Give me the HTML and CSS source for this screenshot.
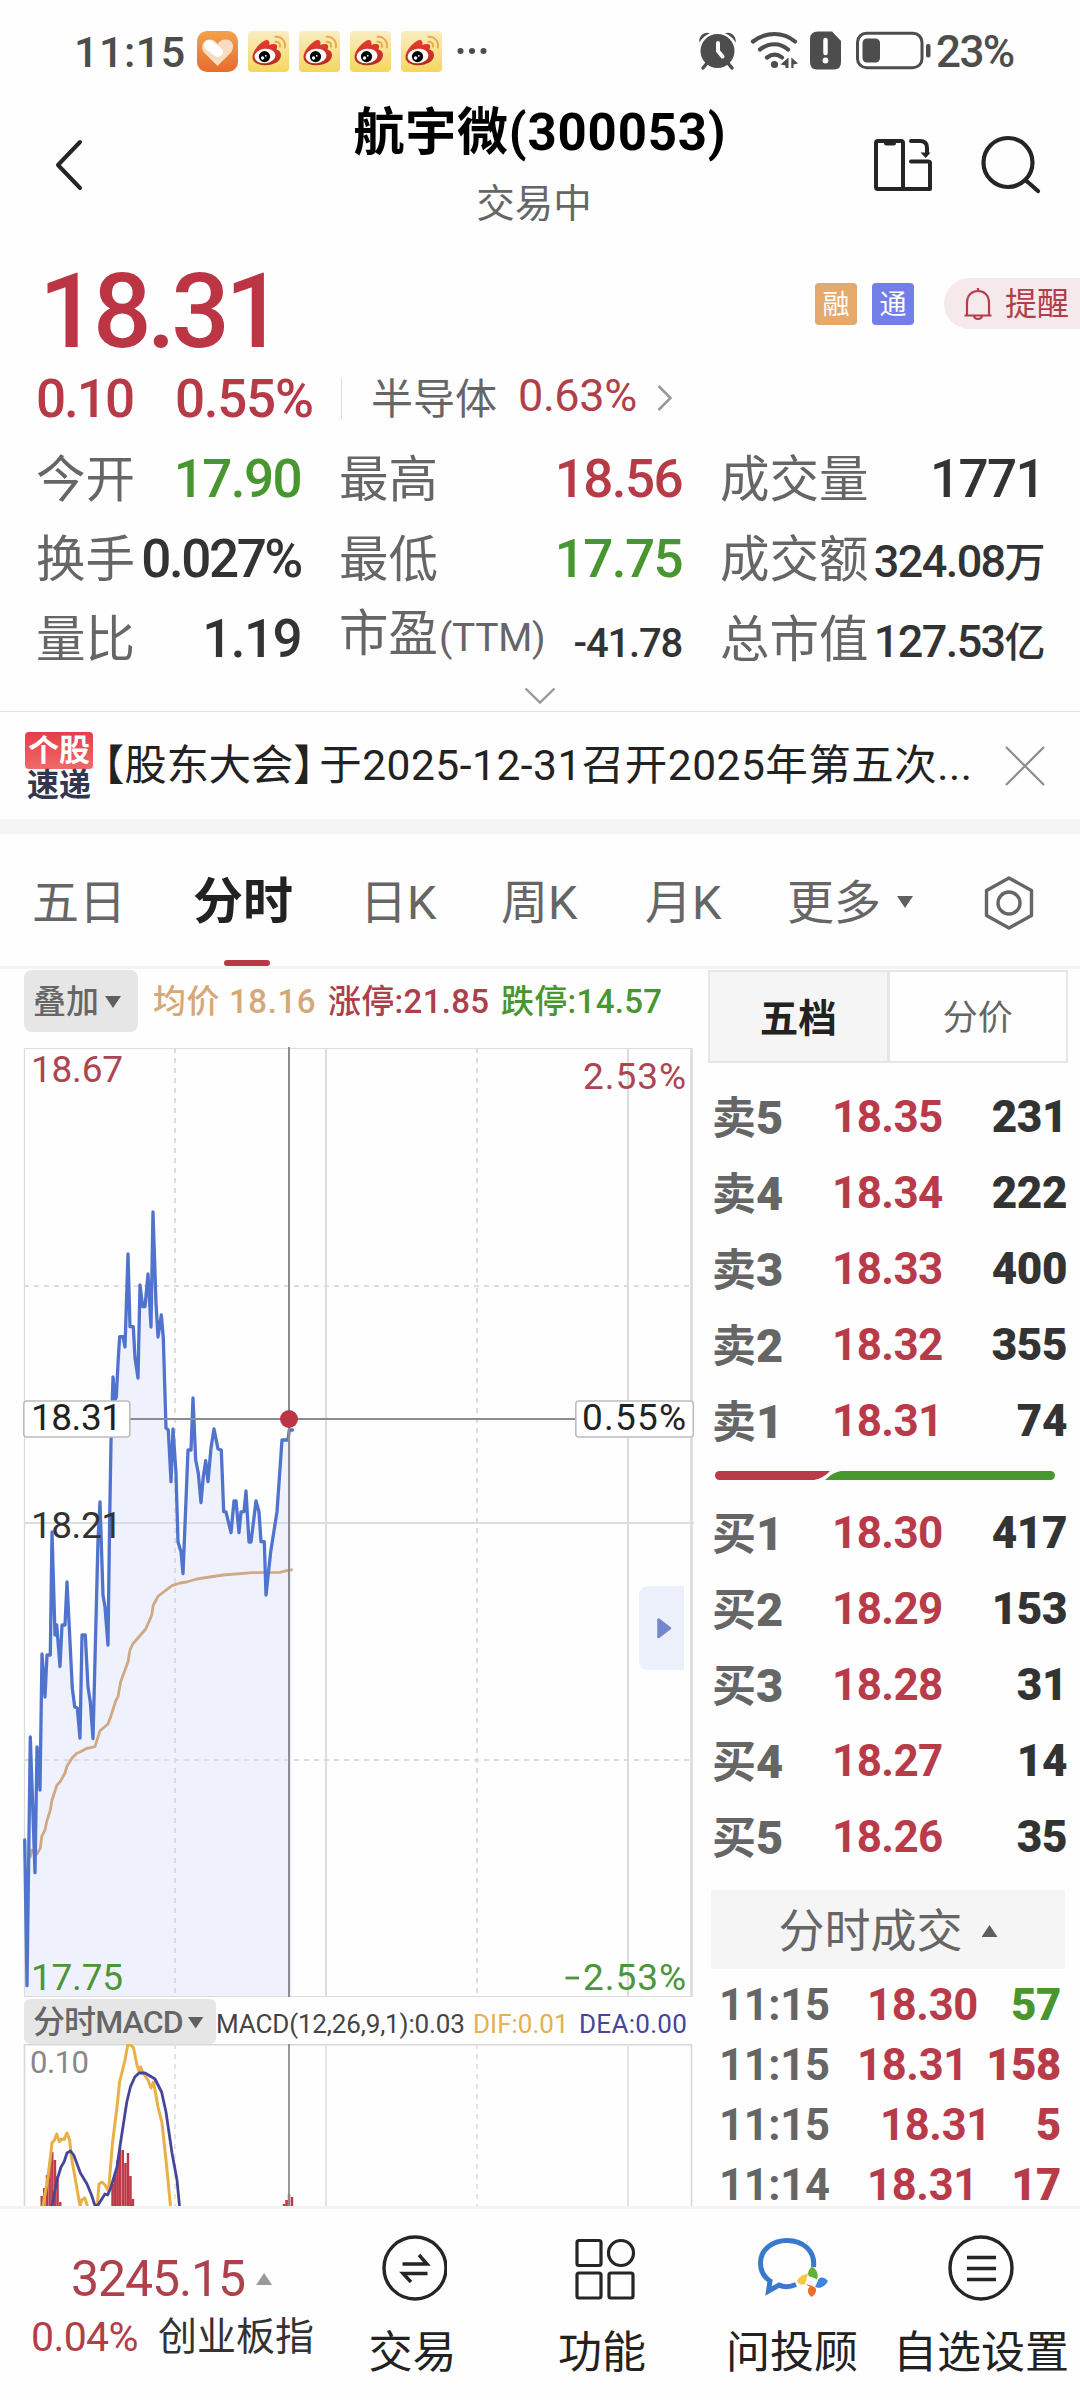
FILE: index.html
```html
<!DOCTYPE html>
<html lang="zh-CN">
<head>
<meta charset="utf-8">
<title>航宇微(300053)</title>
<link rel="stylesheet" href="styles.css">
</head>
<body>
<svg class="defs" aria-hidden="true">
  <defs>
    <linearGradient id="gHeart" x1="0" y1="0" x2="0" y2="1"><stop offset="0" stop-color="#f2a24c"/><stop offset="1" stop-color="#e86b2e"/></linearGradient>
    <linearGradient id="gWb" x1="0" y1="0" x2="0" y2="1"><stop offset="0" stop-color="#f9edc4"/><stop offset="1" stop-color="#f6d65c"/></linearGradient>
    <linearGradient id="gWbRed" x1="0" y1="0" x2="0" y2="1"><stop offset="0" stop-color="#ea3b30"/><stop offset="1" stop-color="#b02c22"/></linearGradient>
    <symbol id="weibo" viewBox="0 0 41 41">
      <rect width="41" height="41" rx="4" fill="url(#gWb)"/>
      <path d="M4.500 26C4.500 20 12 11 18 9C21 8.300 22 11 21.300 14C24 12.600 28 12.500 29 14.500C29.600 16 28.500 17.500 28.500 18.500C31 19 33 21 33 24C33 30 26 34.300 17.500 34.300C10 34.300 4.500 31.500 4.500 26Z" fill="url(#gWbRed)"/>
      <ellipse cx="17" cy="25" rx="10.500" ry="7.300" fill="#fff" transform="rotate(-6 17 25)"/>
      <circle cx="16.500" cy="25.600" r="5.600" fill="#000"/>
      <circle cx="14.600" cy="27" r="1.700" fill="#fff"/><circle cx="17.800" cy="24.800" r=".9" fill="#fff"/>
      <path d="M27.500 5.800C33 4.800 38 10 36.800 16.500M27.500 10.800C30.500 10.400 32.600 12.600 32 15.700" fill="none" stroke="#e8ab45" stroke-width="2" stroke-linecap="round"/>
    </symbol>
  </defs>
</svg>

<header class="status">
  <span class="status-time">11:15</span>
  <div class="apps">
    <svg width="41" height="41" viewBox="0 0 41 41"><rect width="41" height="41" rx="10" fill="url(#gHeart)"/><path d="M20.500 35L7 21.500C3 16 6 8.500 12.500 8.500C16.500 8.500 19 10.500 20.500 13C22 10.500 25 8.500 29 8.500C36 8.500 38 16 34 21.500Z" fill="#fadcc2"/><path d="M12 14L21 21" stroke="#fff" stroke-width="10" stroke-linecap="round"/></svg>
    <svg width="41" height="41"><use href="#weibo"/></svg>
    <svg width="41" height="41"><use href="#weibo"/></svg>
    <svg width="41" height="41"><use href="#weibo"/></svg>
    <svg width="41" height="41"><use href="#weibo"/></svg>
  </div>
  <svg class="more-dots" width="30" height="8" viewBox="0 0 30 8"><g fill="#4d4d4d"><circle cx="3.500" cy="4" r="3"/><circle cx="15" cy="4" r="3"/><circle cx="26.500" cy="4" r="3"/></g></svg>
  <svg class="sys" width="232" height="40" viewBox="699 31 232 40">
    <g fill="#4d4d4d">
      <circle cx="717.500" cy="51" r="17"/>
      <path d="M699.300 42.500C698.500 36 704 31 710 33.200C705 35.500 701.500 38.500 699.300 42.500ZM735.700 42.500C736.500 36 731 31 725 33.200C730 35.500 733.500 38.500 735.700 42.500Z"/>
      <path d="M703 68L708 62M732 68L727 62" stroke="#4d4d4d" stroke-width="3.500" stroke-linecap="round"/>
      <path d="M718 43V51L722.500 56.500" fill="none" stroke="#fff" stroke-width="4" stroke-linecap="round" stroke-linejoin="round"/>
      <circle cx="774.500" cy="64.500" r="3.600"/>
      <path d="M788.500 57.500V68H785.500V65.500L780.500 64.500ZM791.300 57.500L798 63.500L793.500 64.500V68H791.300Z"/>
      <path d="M818 31.500H832L841 41V62Q841 69.500 834 69.500H817Q810 69.500 810 62V39Q810 31.500 818 31.500Z"/>
    </g>
    <path d="M753 41.500C766 31.500 783 31.500 795 41.500M760 49.500C769 42.500 780 42.500 788 49.500M767 57.500C772 53.800 777.500 53.800 782 57.500" fill="none" stroke="#4d4d4d" stroke-width="4.200" stroke-linecap="round"/>
    <path d="M825.500 40V53" stroke="#fff" stroke-width="4.500" stroke-linecap="round"/><circle cx="825.500" cy="60.500" r="2.900" fill="#fff"/>
    <rect x="857.500" y="33.200" width="64.500" height="34.500" rx="9" fill="none" stroke="#4d4d4d" stroke-width="3"/>
    <rect x="862.500" y="38.500" width="17.500" height="24" rx="4.500" fill="#4d4d4d"/><rect x="926" y="44" width="4.500" height="13.500" rx="2" fill="#4d4d4d"/>
  </svg>
  <span class="battery">23%</span>
</header>

<nav class="top">
  <svg class="back" width="30" height="54" viewBox="0 0 30 54"><path d="M26 4L4 27L26 50" fill="none" stroke="#252525" stroke-width="4" stroke-linecap="round" stroke-linejoin="round"/></svg>
  <div class="title">
    <h1>航宇微(300053)</h1>
    <p>交易中</p>
  </div>
  <div class="top-actions">
    <svg width="60" height="56" viewBox="873 137 60 56"><g fill="none" stroke="#252525" stroke-width="4" stroke-linejoin="round" stroke-linecap="round"><path d="M902.500 189H878Q876 189 876 187V143Q876 141 878 141H901Q903 141 903 143V189H930V163Q930 161.500 928 161.500H911M911 141H920Q927 141 927 148V153"/></g><path d="M884 141H896V143Q896 145.500 893.500 145.500H886.500Q884 145.500 884 143ZM920.500 152.500H930.500L925.800 158Z" fill="#252525"/></svg>
    <svg width="60" height="60" viewBox="981 136 60 60"><circle cx="1008" cy="163.500" r="24.500" fill="none" stroke="#252525" stroke-width="4.200"/><path d="M1026 181.500L1038 192" stroke="#252525" stroke-width="4.200" stroke-linecap="round"/></svg>
  </div>
</nav>

<section class="quote">
  <div class="price-row">
    <span class="price">18.31</span>
    <div class="badges">
      <span class="badge rong">融</span>
      <span class="badge tong">通</span>
      <span class="remind"><svg width="30" height="36" viewBox="0 0 30 36"><path d="M15 2V5M4 29.500V17C4 9 9 5 15 5S26 9 26 17V29.500M1.500 29.500H28.500M11 30C12 34 18 34 19 30" fill="none" stroke="#b83b49" stroke-width="2.200"/></svg>提醒</span>
    </div>
  </div>
  <div class="change-row">
    <span class="chg c1">0.10</span><span class="chg c2">0.55%</span>
    <span class="sector">半导体</span><span class="sector-pct">0.63%</span>
    <svg width="18" height="30" viewBox="0 0 18 30"><path d="M2.500 3L14.500 15L2.500 27" fill="none" stroke="#999" stroke-width="2.600"/></svg>
  </div>
  <div class="stats">
    <div class="stat"><span>今开</span><b class="green">17.90</b></div>
    <div class="stat"><span>最高</span><b class="red">18.56</b></div>
    <div class="stat"><span>成交量</span><b class="vol">1771</b></div>
    <div class="stat"><span>换手</span><b class="turn">0.027%</b></div>
    <div class="stat"><span>最低</span><b class="green">17.75</b></div>
    <div class="stat"><span>成交额</span><b class="mid">324.08<i>万</i></b></div>
    <div class="stat"><span>量比</span><b>1.19</b></div>
    <div class="stat"><span class="pe">市盈<small>(TTM)</small></span><b class="sm">-41.78</b></div>
    <div class="stat"><span>总市值</span><b class="mid">127.53<i>亿</i></b></div>
  </div>
  <div class="expand"><svg width="32" height="18" viewBox="0 0 32 18"><path d="M1.500 1.500L16 15.500L30.500 1.500" fill="none" stroke="#999" stroke-width="2.400"/></svg></div>
</section>

<section class="news">
  <div class="news-tag"><span>个股</span><em>速递</em></div>
  <p><span class="bracket">【股东大会】</span>于2025-12-31召开2025年第五次...</p>
  <svg width="42" height="42" viewBox="0 0 42 42"><path d="M2 2L40 40M40 2L2 40" stroke="#8c8c8c" stroke-width="2.200"/></svg>
</section>

<nav class="tabs">
  <a class="t1">五日</a><a class="t2 on">分时</a><a class="t3">日K</a><a class="t4">周K</a><a class="t5">月K</a><a class="t6">更多<i class="tri"></i></a>
  <svg width="52" height="56" viewBox="0 0 52 56"><g fill="none" stroke="#666" stroke-width="3.400" stroke-linejoin="round"><path d="M26 3L48.500 15.500V40.500L26 53L3.500 40.500V15.500Z"/><circle cx="26" cy="28" r="11"/></g></svg>
</nav>

<main class="board">
  <section class="left">
    <div class="legend">
      <button class="overlay">叠加<i class="tri"></i></button>
      <span class="avg">均价 18.16</span><span class="up">涨停:21.85</span><span class="down">跌停:14.57</span>
    </div>
    <svg class="chart" width="700" height="952" viewBox="0 1046 700 952">
      <path d="M24.700 1840L27 1985.700L30.300 1737L35 1872.700L37 1747L40 1790L42 1654L45 1697L47 1655L50.300 1655L52 1532L55 1635L56.700 1625L60 1666.500L62 1625L65 1625L67 1582L72.300 1688L74.700 1707L77.300 1708L80 1738L82 1635L85.300 1635L88 1687L90.300 1702L93 1738.500L98 1540L100 1502L103 1595L105 1607L108 1645L109.500 1530L111 1441.700L113 1377L115 1400L116.300 1397L118.300 1358L119.700 1336.700L123 1336.700L125 1347L128 1254L130 1326.700L133.300 1326.700L135 1358L138 1378L140 1285L142.700 1306.700L145 1306.700L148 1274L151 1327L153 1212L156 1303L158 1337L161.300 1315L163.300 1338L166 1428L168.300 1430L171 1481.700L173 1429L176 1473L178 1541.700L181 1551.700L183 1573.700L186 1500L188 1450L191 1450L193 1398L195.700 1460L198.300 1473L201 1502.700L203.300 1476.700L205.700 1460.700L208 1481.700L211 1448L214 1429L218 1449L221.300 1450L223.700 1511.700L226 1512L231 1532.700L234 1501L236 1501L239 1532.700L241 1512L244 1511.700L246 1491L249 1542L251 1542L256 1501L259 1511.700L261 1541.700L264.300 1541.700L266 1595L270.700 1551.700L277 1511.700L282 1440L288 1440L289.300 1430L291.500 1430V1996H24.700Z" fill="#eff2fc"/>
      <g fill="none" stroke="#dcdcdc" stroke-width="2">
        <path d="M24.500 1996V1048.500H692M24 1996.500H692" stroke-width="1.200"/>
        <path d="M326 1048V1997M628 1048V1997M24 1523H694"/>
        <path d="M691.500 1048V1997" stroke-width="2.600"/>
        <path d="M175 1048V1996M477 1048V1996" stroke-dasharray="5 5"/>
        <path d="M24 1286H690M24 1760H690" stroke-dasharray="5 5"/>
      </g>
      <path d="M30 1858L31.700 1850L37 1854L40.300 1848L41.700 1836.700L45 1830L46.700 1821.700L50.300 1810L52 1800L57 1785L60 1782L65 1773L67 1766L72.300 1757.700L77 1753L79 1752.500L86 1748.700L95 1746.700L100 1730.700L108 1724L110.700 1716.700L115.700 1701L118 1696.700L120.700 1681.700L128 1661.700L130 1650L132.700 1644L145.700 1629L149 1621.700L151.700 1615L153.300 1605L158.300 1596L172 1585.700L180 1583L186.700 1582L196.700 1579L223 1575L253 1572.700L280 1572.300L285 1571L292.700 1569.700" fill="none" stroke="#cfa884" stroke-width="2.800" stroke-linejoin="round"/>
      <path d="M24.700 1840L27 1985.700L30.300 1737L35 1872.700L37 1747L40 1790L42 1654L45 1697L47 1655L50.300 1655L52 1532L55 1635L56.700 1625L60 1666.500L62 1625L65 1625L67 1582L72.300 1688L74.700 1707L77.300 1708L80 1738L82 1635L85.300 1635L88 1687L90.300 1702L93 1738.500L98 1540L100 1502L103 1595L105 1607L108 1645L109.500 1530L111 1441.700L113 1377L115 1400L116.300 1397L118.300 1358L119.700 1336.700L123 1336.700L125 1347L128 1254L130 1326.700L133.300 1326.700L135 1358L138 1378L140 1285L142.700 1306.700L145 1306.700L148 1274L151 1327L153 1212L156 1303L158 1337L161.300 1315L163.300 1338L166 1428L168.300 1430L171 1481.700L173 1429L176 1473L178 1541.700L181 1551.700L183 1573.700L186 1500L188 1450L191 1450L193 1398L195.700 1460L198.300 1473L201 1502.700L203.300 1476.700L205.700 1460.700L208 1481.700L211 1448L214 1429L218 1449L221.300 1450L223.700 1511.700L226 1512L231 1532.700L234 1501L236 1501L239 1532.700L241 1512L244 1511.700L246 1491L249 1542L251 1542L256 1501L259 1511.700L261 1541.700L264.300 1541.700L266 1595L270.700 1551.700L277 1511.700L282 1440L288 1440L289.300 1430L292.500 1430" fill="none" stroke="#5074ce" stroke-width="3.300" stroke-linejoin="round" stroke-linecap="round"/>
      <path d="M289 1047V1997M130 1419H576" stroke="#8d8d91" stroke-width="2" fill="none"/>
      <circle cx="289" cy="1419" r="9" fill="#bb3545"/>
      <g fill="#fff" stroke="#bdbdbd" stroke-width="1.600"><rect x="23.800" y="1401" width="106" height="36" rx="3"/><rect x="575.800" y="1401" width="117.500" height="36" rx="3"/></g>
      <g class="axis">
        <text x="31" y="1082" fill="#ad4550" textLength="92">18.67</text>
        <text x="583" y="1089" fill="#ad4550" textLength="103">2.53%</text>
        <text x="31" y="1430" fill="#222" textLength="91">18.31</text>
        <text x="582" y="1430" fill="#222" textLength="104">0.55%</text>
        <text x="31" y="1537.500" fill="#333" textLength="91">18.21</text>
        <text x="31" y="1989.500" fill="#4b953a" textLength="92">17.75</text>
        <text x="583" y="1989.500" fill="#4b953a" textLength="103">2.53%</text><path d="M565.500 1978H579" stroke="#4b953a" stroke-width="2.800"/>
      </g>
      <path d="M684 1586H649Q639 1586 639 1596V1660Q639 1670 649 1670H684Z" fill="#ebf0fb"/>
      <path d="M658.500 1619.500V1637L670 1628.300Z" fill="#7388cc" stroke="#7388cc" stroke-width="2.500" stroke-linejoin="round"/>
    </svg>
    <div class="macd-bar">
      <button>分时MACD<i class="tri"></i></button>
      <span class="m1">MACD(12,26,9,1):0.03</span><span class="m2">DIF:0.01</span><span class="m3">DEA:0.00</span>
    </div>
    <svg class="chart" width="700" height="162" viewBox="0 2044 700 162">
      <g fill="none" stroke="#e2e2e2" stroke-width="1.800">
        <path d="M24.500 2206V2044.800H691.500V2206" stroke="#d8d8d8" stroke-width="1.600"/>
        <path d="M326 2044V2206M628 2044V2206"/><path d="M175 2044V2206M477 2044V2206" stroke-dasharray="5 5"/>
      </g>
      <path d="M41.700 2196V2206M44.200 2188V2206M47 2175V2206M49.700 2165V2206M52.300 2152V2206M55 2160V2206M57.600 2176V2206M60.300 2202V2206M112.500 2184V2206M115 2175V2206M117.500 2160V2206M120 2148V2206M122.800 2150V2206M125.400 2163V2206M128 2153V2206M130.500 2176V2206M133 2199V2206M284 2204V2206M286.500 2200V2206M289 2194V2206M292 2197V2206" stroke="#bb3a48" stroke-width="2.400" fill="none"/>
      <path d="M43 2206L48 2177L52 2143L54.500 2140L56.700 2134L59.400 2141.700L61.600 2139L64 2139.500L67 2133L69.600 2140L71.400 2157L76 2183L80 2206L81.700 2200L84.800 2198L87.500 2206M97.300 2206L99 2184L102 2182L105 2185L108.500 2191L112.500 2143L117 2107L119.600 2082L125 2060L127.700 2045L131 2045L133.500 2048L137 2065L139 2071L140.600 2067L143 2073L148 2080L151 2088L153.600 2082L158 2107L162 2123L166 2160L170.500 2206" fill="none" stroke="#e9b048" stroke-width="3" stroke-linejoin="round"/>
      <path d="M52 2206L57 2180L61 2167L64 2162L67 2153L70.500 2151L73.700 2155L80.400 2173L87 2184L91.500 2195L95 2205.700L98 2205L105 2194L107.600 2195L110.700 2188L117 2167L121.400 2137L126.800 2102L130.400 2087L134.800 2077L139 2073L145 2073L155 2079L161.600 2092L166 2112L172 2153L177 2180L179.500 2206" fill="none" stroke="#45459a" stroke-width="2.800" stroke-linejoin="round"/>
      <path d="M289 2044V2206" stroke="#8d8d91" stroke-width="1.800"/>
      <text class="macd-label" x="30" y="2073" textLength="59">0.10</text>
    </svg>
  </section>

  <aside class="right">
    <div class="seg"><span class="on">五档</span><span>分价</span></div>
    <ul class="book">
      <li><span>卖<b>5</b></span><em>18.35</em><strong>231</strong></li>
      <li><span>卖<b>4</b></span><em>18.34</em><strong>222</strong></li>
      <li><span>卖<b>3</b></span><em>18.33</em><strong>400</strong></li>
      <li><span>卖<b>2</b></span><em>18.32</em><strong>355</strong></li>
      <li><span>卖<b>1</b></span><em>18.31</em><strong>74</strong></li>
    </ul>
    <svg class="ratio" width="340" height="9" viewBox="0 0 340 9"><path d="M4.500 0H115Q109 7 99 9H4.500A4.500 4.500 0 0 1 4.500 0Z" fill="#b93b48"/><path d="M110 9Q118 1 126 0H335.500A4.500 4.500 0 0 1 335.500 9Z" fill="#48982f"/></svg>
    <ul class="book buy">
      <li><span>买<b>1</b></span><em>18.30</em><strong>417</strong></li>
      <li><span>买<b>2</b></span><em>18.29</em><strong>153</strong></li>
      <li><span>买<b>3</b></span><em>18.28</em><strong>31</strong></li>
      <li><span>买<b>4</b></span><em>18.27</em><strong>14</strong></li>
      <li><span>买<b>5</b></span><em>18.26</em><strong>35</strong></li>
    </ul>
    <div class="ticks-head">分时成交<i class="tri up-tri"></i></div>
    <ul class="ticks">
      <li><span>11:15</span><em>18.30</em><strong class="g">57</strong></li>
      <li><span>11:15</span><em>18.31</em><strong>158</strong></li>
      <li><span>11:15</span><em>18.31</em><strong>5</strong></li>
      <li><span>11:14</span><em>18.31</em><strong>17</strong></li>
    </ul>
  </aside>
</main>

<footer class="bottom">
  <div class="index">
    <div class="idx-val">3245.15<i class="tri up-tri"></i></div>
    <div class="idx-sub"><span>0.04%</span><b>创业板指</b></div>
  </div>
  <a class="n1"><svg width="68" height="68" viewBox="379 2234 68 68"><g fill="none" stroke="#252525" stroke-width="3.400"><circle cx="415" cy="2268" r="31"/><path d="M402.500 2264H427L419 2255M427.500 2273.500H403L411 2282"/></g></svg>交易</a>
  <a class="n2"><svg width="68" height="68" viewBox="568 2235 68 68"><g fill="none" stroke="#252525" stroke-width="3.200"><rect x="577" y="2241.500" width="24" height="25" rx="2"/><circle cx="621" cy="2254" r="12.500"/><rect x="577" y="2274" width="24" height="25" rx="2"/><rect x="609" y="2274" width="24" height="25" rx="2"/></g></svg>功能</a>
  <a class="n3"><svg width="76" height="68" viewBox="754 2235 76 68"><path d="M813.500 2268C815.500 2252 803 2241.500 787 2241.500C772 2241.500 760.500 2251 760.500 2264C760.500 2272 764 2278 770 2282L768.500 2292L779 2286C784 2288.500 790 2288 796 2285.500" fill="none" stroke="#3a78cc" stroke-width="5"/><path d="M812 2267.500C807 2272 806.500 2278 812 2278L817 2280.500C819 2275 817 2271 812 2267.500Z" fill="#62b235"/><path d="M828 2282C823 2276.500 818 2278 817.500 2283L815 2288C820 2290 825 2288 828 2282Z" fill="#4184e0"/><path d="M811.500 2298C807.500 2295 806.500 2290 810 2288L805.500 2285C810 2286 815 2287.500 816 2290C816.500 2293 815 2296 811.500 2298Z" fill="#e8702d"/><path d="M797 2282C799 2278 802 2276 808 2274.500L806 2282C806 2286 800.500 2288 797 2282Z" fill="#f3c844"/></svg>问投顾</a>
  <a class="n4"><svg width="68" height="68" viewBox="947 2234 68 68"><g fill="none" stroke="#252525" stroke-width="3.400"><circle cx="981" cy="2268" r="31"/><path d="M967 2257.500H996M967 2268.500H996M967 2279.500H996"/></g></svg>自选设置</a>
</footer>
</body>
</html>
```
FILE: styles.css
```css
* { box-sizing: border-box; margin: 0; padding: 0; }
body {
  width: 1080px; height: 2400px; overflow: hidden; background: #fefefe; color: #222;
  font-family: Roboto, "Noto Sans CJK SC", sans-serif; line-height: 1; white-space: nowrap;
}
svg { display: block; flex: none; }
ul { list-style: none; }
em, i { font-style: normal; }
button { border: 0; font: inherit; color: inherit; }
.defs { position: absolute; width: 0; height: 0; }
.tri { display: inline-block; flex: none; width: 16px; height: 12px; background: #5f5f5f; clip-path: polygon(0 0, 100% 0, 50% 100%); }
.up-tri { clip-path: polygon(50% 0, 100% 100%, 0 100%); }

.status { display: flex; align-items: center; height: 102px; padding-left: 74px; color: #4d4d4d; font-weight: 500; }
.status-time { width: 123px; padding-top: 2px; font-size: 43px; letter-spacing: .5px; }
.apps { display: flex; gap: 10px; }
.more-dots { margin-left: 15px; }
.sys { margin-left: 212px; }
.battery { margin-left: 5px; padding-top: 1px; font-size: 44px; letter-spacing: -1.600px; }

.top { display: flex; align-items: center; height: 126px; padding: 0 39px 0 54px; }
.title { flex: 1; align-self: stretch; text-align: center; padding-left: 123px; }
.title h1 { font-size: 51px; line-height: 62px; font-weight: 700; color: #000; letter-spacing: .8px; }
.title p { margin: 15px 12px 0 0; font-size: 38.500px; line-height: 50px; color: #666; }
.top-actions { display: flex; align-items: center; gap: 48px; }

.quote { height: 484px; border-bottom: 1px solid #e2e2e2; }
.price-row { display: flex; align-items: center; height: 134px; padding: 32px 0 0 39px; }
.price { flex: 1; font-size: 103px; font-weight: 500; color: #bb3545; letter-spacing: -4.500px; }
.badges { display: flex; align-items: center; margin-bottom: 15px; }
.badge { width: 42px; height: 42px; margin-right: 15px; border-radius: 4px; color: #fff; font-size: 27px; line-height: 45px; text-align: center; }
.rong { background: #e5a96e; }
.tong { background: #747ee8; }
.remind { display: flex; align-items: center; gap: 12px; width: 136px; height: 51px; margin-left: 15px; padding-left: 19px; border-radius: 26px 0 0 26px; background: #f6e9eb; color: #b23d49; font-size: 32px; }
.change-row { display: flex; align-items: center; height: 72px; padding-left: 36px; }
.chg { padding-top: 2px; font-size: 53px; font-weight: 500; color: #b63b47; letter-spacing: -2px; }
.c1 { width: 139px; }
.c2 { width: 166px; letter-spacing: -1.300px; }
.sector { width: 177px; height: 41px; padding: 1px 0 0 29px; border-left: 1px solid #ddd; color: #666; font-size: 42px; }
.sector-pct { width: 138px; margin-top: -5px; font-size: 45px; color: #b03f4a; letter-spacing: -.400px; }
.stats { display: grid; grid-template-columns: 265px 343px 325px; grid-template-rows: repeat(3, 80px); column-gap: 38px; padding: 5px 0 0 36px; }
.stat { display: flex; align-items: center; justify-content: space-between; color: #666; font-size: 49.500px; }
.stat span { margin-top: 3px; }
.stat b { margin-top: 1px; font-weight: 500; color: #333; font-size: 53px; letter-spacing: -1.600px; }
.stat b.red { color: #b63b47; }
.stat b.green { color: #48962f; }
.stat b.vol { margin-right: 1px; }
.stat b.turn { letter-spacing: -2.400px; }
.stat b.mid { font-size: 45px; letter-spacing: -1.600px; margin: 4px 1px 0 0; }
.stat b.mid i { font-size: 41px; }
.stat b.sm { font-size: 40px; letter-spacing: -1.200px; margin-top: 10px; }
.stat .pe { margin-top: -8px; }
.pe small { font-size: 39px; letter-spacing: -.3px; margin-left: 1px; }
.expand { display: flex; justify-content: center; padding-top: 8px; }

.news { display: flex; align-items: center; height: 107px; padding-left: 25px; }
.news-tag { width: 68px; height: 68px; text-align: center; font-weight: 700; }
.news-tag span { display: block; height: 37px; border-radius: 4px; background: linear-gradient(#e63c4a, #ee6b68); color: #fff; font-size: 31px; line-height: 38px; }
.news-tag em { display: block; font-size: 32px; line-height: 33px; color: #33364e; }
.news p { width: 911px; padding-top: 2px; font-size: 42.500px; letter-spacing: .500px; }
.bracket { margin-left: -11px; margin-right: -16px; letter-spacing: -.3px; }

.tabs { position: relative; display: flex; align-items: center; height: 150px; border-top: 15px solid #f5f5f5; border-bottom: 3px solid #f3f3f3; padding: 4px 0 0 32px; color: #666; font-size: 47px; }
.tabs svg { margin-top: 2px; }
.tabs .t1 { width: 161px; }
.tabs .t2 { width: 167px; }
.tabs .t3 { width: 141px; }
.tabs .t4 { width: 144px; }
.tabs .t5 { width: 142px; }
.tabs .t6 { display: flex; align-items: center; gap: 16px; width: 196px; }
.tabs .on { color: #222; font-size: 50px; font-weight: 700; }
.tabs .on::after { content: ""; position: absolute; left: 224px; bottom: 0; width: 46px; height: 6px; border-radius: 3px; background: #ba3845; }

.board { display: flex; height: 1237px; }
.left { width: 708px; }
.legend { display: flex; height: 77px; padding: 1px 0 0 24px; font-size: 33px; font-weight: 500; line-height: 64px; letter-spacing: .300px; }
.overlay { display: flex; align-items: center; gap: 6px; width: 114px; height: 62px; margin-right: 15px; padding: 2px 0 0 9px; border-radius: 8px; background: #e6e6e6; color: #666; }
.avg { width: 175px; color: #d5a878; letter-spacing: .6px; }
.up { width: 173px; color: #ad3f4b; }
.down { color: #48962f; }
.axis text { font-size: 37px; }
.macd-label { font-size: 31px; fill: #888; }
.macd-bar { display: flex; height: 46px; padding: 1px 0 0 24px; font-size: 26px; line-height: 51px; }
.macd-bar button { display: flex; align-items: center; gap: 5px; width: 192px; height: 45px; padding: 2px 0 0 9px; border-radius: 6px; background: #e6e6e6; color: #666; font-size: 32px; font-weight: 500; letter-spacing: -.900px; }
.m1 { width: 257px; color: #444; letter-spacing: -.15px; }
.m2 { width: 106px; color: #e3b052; }
.m3 { color: #45459a; letter-spacing: .3px; }

.right { width: 360px; padding-top: 1px; }
.seg { display: flex; height: 93px; border: 2px solid #e6e6e6; line-height: 93px; text-align: center; }
.seg span { flex: 1; height: 89px; font-size: 35px; color: #666; }
.seg .on { border-right: 3px solid #e6e6e6; background: #f5f5f5; color: #222; font-size: 38.500px; font-weight: 700; }
.book { padding: 16px 1px 0 4px; }
.book li { display: flex; align-items: center; height: 76px; font-weight: 700; }
.book span { width: 120px; font-size: 44px; color: #666; }
.book span b { font-size: 47px; }
.book em { flex: 1; font-size: 44px; color: #b83b49; letter-spacing: -.600px; }
.book strong { font-size: 44px; color: #333; letter-spacing: -.4px; }
.ratio { margin: 12px 0 0 7px; }
.book.buy { padding-top: 15px; }
.ticks-head { display: flex; align-items: center; justify-content: center; gap: 19px; width: 354px; height: 79px; margin: 15px 0 0 3px; padding-top: 3px; background: #f5f5f5; color: #666; font-size: 46px; }
.ticks { padding: 7px 7px 0 11px; }
.ticks li { display: flex; align-items: center; height: 60px; font-size: 43.500px; font-weight: 700; color: #b83b49; letter-spacing: -.3px; }
.ticks span { width: 148px; color: #666; }
.ticks li:nth-child(2) span { width: 138px; }
.ticks li:nth-child(3) span { width: 161px; }
.ticks em { flex: 1; }
.ticks .g { color: #48962f; }

.bottom { display: flex; width: 1090px; height: 194px; border-top: 3px solid #f3f3f3; }
.index { width: 333px; }
.idx-val { display: flex; align-items: center; gap: 11px; height: 50px; margin: 45px 0 0 71px; font-size: 50px; color: #ad424d; letter-spacing: -1.100px; }
.idx-val .tri { background: #999; }
.idx-sub { display: flex; align-items: center; height: 50px; margin: 8px 0 0 31px; }
.idx-sub span { width: 127px; font-size: 41px; color: #b03f4a; letter-spacing: -.600px; }
.idx-sub b { font-size: 39px; font-weight: 400; color: #333; }
.bottom a { display: flex; flex: none; flex-direction: column; align-items: center; gap: 29px; padding-top: 25px; font-size: 44px; color: #222; }
.bottom .n1 { width: 159px; }
.bottom .n2 { width: 220px; }
.bottom .n3 { width: 160px; }
.bottom .n4 { width: 218px; }
```
